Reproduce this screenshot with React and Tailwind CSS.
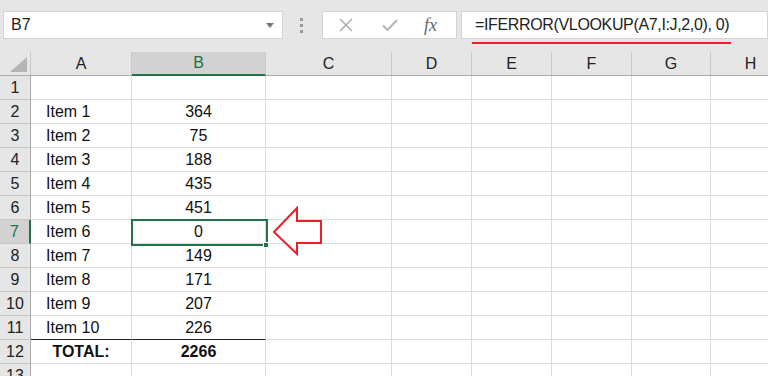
import React from 'react'

const cols = [
  { key: 'A', w: 'w-[101px]' },
  { key: 'B', w: 'w-[134px]' },
  { key: 'C', w: 'w-[126px]' },
  { key: 'D', w: 'w-[80px]' },
  { key: 'E', w: 'w-[80px]' },
  { key: 'F', w: 'w-[80px]' },
  { key: 'G', w: 'w-[79px]' },
  { key: 'H', w: 'w-[80px]' },
]

const data = [
  ['', ''],
  ['Item 1', '364'],
  ['Item 2', '75'],
  ['Item 3', '188'],
  ['Item 4', '435'],
  ['Item 5', '451'],
  ['Item 6', '0'],
  ['Item 7', '149'],
  ['Item 8', '171'],
  ['Item 9', '207'],
  ['Item 10', '226'],
  ['TOTAL:', '2266'],
  ['', ''],
]

function HeaderRow() {
  return (
    <div className="flex h-[24px] bg-[#e6e6e6] border-b border-[#ababab]">
      <div className="relative w-[31px] shrink-0 border-r border-[#c8c8c8]">
        <svg className="absolute left-[10px] top-[5px]" width="17" height="15" viewBox="0 0 17 15">
          <polygon points="17,0 17,15 0,15" fill="#b4b4b4" />
        </svg>
      </div>
      {cols.map((c) =>
        c.key === 'B' ? (
          <div
            key={c.key}
            className={`${c.w} shrink-0 flex items-center justify-center bg-[#d2d2d2] text-[#217346] border-r border-[#c8c8c8] border-b-2 border-b-[#217346] -mb-px`}
          >
            {c.key}
          </div>
        ) : (
          <div
            key={c.key}
            className={`${c.w} shrink-0 flex items-center justify-center text-[#222] border-r border-[#c8c8c8]`}
          >
            {c.key}
          </div>
        )
      )}
    </div>
  )
}

function Row({ n, a, b }) {
  const selected = n === 7
  const total = n === 12
  const aboveTotal = n === 11
  return (
    <div className="flex h-[24px]">
      <div
        className={
          selected
            ? 'w-[31px] shrink-0 flex items-center justify-center bg-[#d2d2d2] text-[#217346] border-b border-[#c8c8c8] border-r-2 border-r-[#217346]'
            : 'w-[31px] shrink-0 flex items-center justify-center bg-[#e6e6e6] text-[#222] border-b border-[#c8c8c8] border-r border-r-[#ababab]'
        }
      >
        {n}
      </div>
      <div
        className={`w-[101px] shrink-0 flex items-center border-r border-[#dadada] ${
          aboveTotal ? 'border-b border-b-[#222]' : 'border-b border-[#dadada]'
        } ${total ? 'justify-center font-bold' : 'pl-[15px]'}`}
      >
        {a}
      </div>
      <div
        className={`w-[134px] shrink-0 flex items-center justify-center border-r border-[#dadada] ${
          aboveTotal ? 'border-b border-b-[#222]' : 'border-b border-[#dadada]'
        } ${total ? 'font-bold' : ''}`}
      >
        {b}
      </div>
      {cols.slice(2).map((c) => (
        <div key={c.key} className={`${c.w} shrink-0 border-r border-b border-[#dadada]`} />
      ))}
    </div>
  )
}

export default function App() {
  return (
    <div className="relative w-[768px] h-[376px] overflow-hidden bg-white text-[16px] text-[#111] font-['Liberation_Sans',Arial,sans-serif]">
      {/* formula bar */}
      <div className="flex h-[52px] bg-[#e6e6e6] pt-[11px]">
        <div className="ml-[3px] w-[280px] h-[28px] bg-white border border-[#d4d4d4] flex items-center justify-between pl-[7px] pr-[8px] text-[#222]">
          <span>B7</span>
          <svg width="8" height="5" viewBox="0 0 8 5">
            <polygon points="0,0 8,0 4,5" fill="#777" />
          </svg>
        </div>
        <div className="ml-[17px] w-[3px] h-[28px] flex flex-col justify-center gap-[3px]">
          <span className="block w-[3px] h-[3px] bg-[#9a9a9a]" />
          <span className="block w-[3px] h-[3px] bg-[#9a9a9a]" />
          <span className="block w-[3px] h-[3px] bg-[#9a9a9a]" />
        </div>
        <div className="ml-[19px] w-[135px] h-[28px] bg-white border border-[#d4d4d4] flex items-center">
          <svg className="ml-[16px]" width="14" height="14" viewBox="0 0 14 14">
            <path d="M1 1 L13 13 M13 1 L1 13" stroke="#a6a6a6" strokeWidth="1.4" fill="none" />
          </svg>
          <svg className="ml-[29px]" width="16" height="14" viewBox="0 0 16 14">
            <path d="M1 7.5 L5.5 12 L15 2" stroke="#b4b4b4" strokeWidth="2" fill="none" />
          </svg>
          <span className="ml-[26px] font-['Liberation_Serif',serif] italic text-[18px] text-[#666] leading-none">
            fx
          </span>
        </div>
        <div className="relative ml-[4px] flex-1 h-[28px] bg-white border border-[#d4d4d4] flex items-center pl-[13px] text-[16px] tracking-[-0.35px] text-[#222]">
          <span>=IFERROR(VLOOKUP(A7,I:J,2,0), 0)</span>
          <div className="absolute left-[10px] top-[30px] w-[259px] h-[2px] bg-[#e8202a]" />
        </div>
      </div>

      {/* grid */}
      <HeaderRow />
      {data.map((r, i) => (
        <Row key={i} n={i + 1} a={r[0]} b={r[1]} />
      ))}

      {/* active cell */}
      <div className="absolute left-[131px] top-[219px] w-[137px] h-[27px] border-2 border-[#217346]" />
      <div className="absolute left-[263px] top-[242px] w-[6px] h-[6px] bg-[#217346] border border-white" />

      {/* callout arrow */}
      <svg className="absolute left-[270px] top-[204px]" width="56" height="54" viewBox="270 204 56 54">
        <polygon
          points="274,232 297,208 297,221 321,221 321,243 297,243 297,254"
          fill="white"
          stroke="#e8202a"
          strokeWidth="2"
          strokeLinejoin="miter"
        />
      </svg>
    </div>
  )
}
